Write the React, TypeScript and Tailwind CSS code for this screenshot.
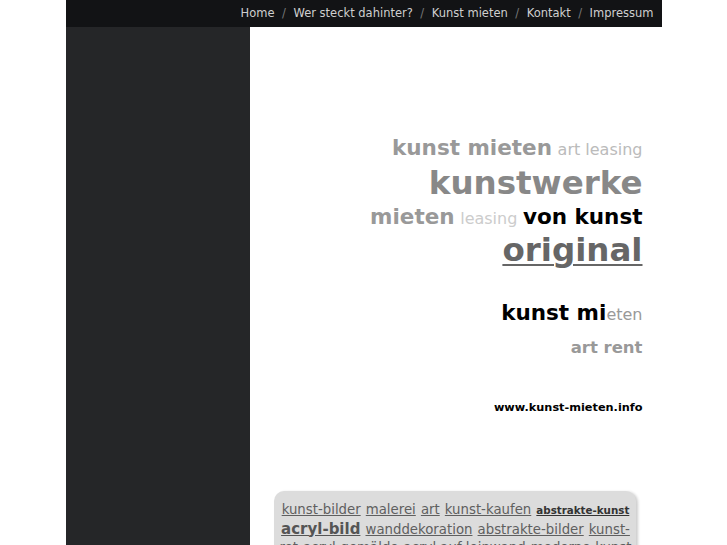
import React from 'react';

// Navigation und Tag-Wolke
const navItems = ['Home', 'Wer steckt dahinter?', 'Kunst mieten', 'Kontakt', 'Impressum'];

const tags: { label: string; cls: string }[] = [
    { label: 'kunst-bilder', cls: 'text-[13.3px] text-[#5f5f5f]' },
    { label: 'malerei', cls: 'text-[13.3px] text-[#5f5f5f]' },
    { label: 'art', cls: 'text-[13.3px] text-[#5f5f5f]' },
    { label: 'kunst-kaufen', cls: 'text-[13.3px] text-[#5f5f5f]' },
    { label: 'abstrakte-kunst', cls: 'text-[10.3px] font-bold text-[#333]' },
    { label: 'acryl-bild', cls: 'text-[15px] font-bold text-[#555]' },
    { label: 'wanddekoration', cls: 'text-[13.3px] text-[#5f5f5f]' },
    { label: 'abstrakte-bilder', cls: 'text-[13.3px] text-[#5f5f5f]' },
    { label: 'kunst-rot', cls: 'text-[13.3px] text-[#5f5f5f]' },
    { label: 'acryl-gemälde', cls: 'text-[13.3px] text-[#5f5f5f]' },
    { label: 'acryl auf leinwand', cls: 'text-[13.3px] text-[#5f5f5f]' },
    { label: 'moderne-kunst', cls: 'text-[13.3px] text-[#5f5f5f]' },
];

export default function App() {
    return (
        <div className="min-h-[545px] bg-white font-['DejaVu_Sans',sans-serif]">
            <div className="mx-auto w-[596px]">
                {/* Kopfzeile */}
                <div className="flex h-[27px] items-center justify-end bg-[#121315] pr-[8px] text-[11.5px] text-[#cfcfcf]">
                    {navItems.map((item, i) => (
                        <React.Fragment key={item}>
                            {i > 0 && <span className="mx-[7.5px] text-[#777]">/</span>}
                            <span>{item}</span>
                        </React.Fragment>
                    ))}
                </div>

                <div className="flex">
                    {/* Seitenleiste */}
                    <div className="w-[184px] shrink-0 bg-[#252628] min-h-[518px]" />

                    {/* Inhalt */}
                    <div className="flex-1 overflow-hidden">
                        <div className="pr-[19px] pt-[104px] text-right font-bold">
                            <div className="leading-[34px]">
                                <span className="text-[21.5px] text-[#999]">kunst mieten</span>{' '}
                                <span className="text-[16px] font-normal text-[#bbb]">art leasing</span>
                            </div>
                            <div className="text-[32.5px] leading-[33px] text-[#888]">kunstwerke</div>
                            <div className="leading-[33px]">
                                <span className="text-[21.5px] text-[#999]">mieten</span>{' '}
                                <span className="text-[16px] font-normal text-[#ccc]">leasing</span>{' '}
                                <span className="text-[21.5px] text-black">von kunst</span>
                            </div>
                            <div className="text-[32.5px] leading-[30px] text-[#666]">
                                <span className="underline decoration-[2px] underline-offset-[3px]">original</span>
                            </div>

                            <div className="mt-[31px] leading-[33px]">
                                <span className="text-[21.5px] text-black">kunst mi</span>
                                <span className="text-[16px] font-normal text-[#999]">eten</span>
                            </div>
                            <div className="text-[16.5px] leading-[33px] text-[#999]">art rent</div>

                            <div className="mt-[34px] text-[11.3px] leading-[20px] text-black">www.kunst-mieten.info</div>
                        </div>

                        {/* Tag-Wolke */}
                        <div className="ml-[24px] mt-[73px] w-[362px] rounded-[10px] bg-[#dcdcdc] pl-[4px] pr-[2px] pt-[9px] pb-[8px] text-center leading-[17.5px] shadow-[2px_1px_3px_rgba(0,0,0,0.2)]">
                            {tags.map((t) => (
                                <React.Fragment key={t.label}>
                                    <a className={`underline ${t.cls}`}>{t.label}</a>{' '}
                                </React.Fragment>
                            ))}
                        </div>
                    </div>
                </div>
            </div>
        </div>
    );
}
